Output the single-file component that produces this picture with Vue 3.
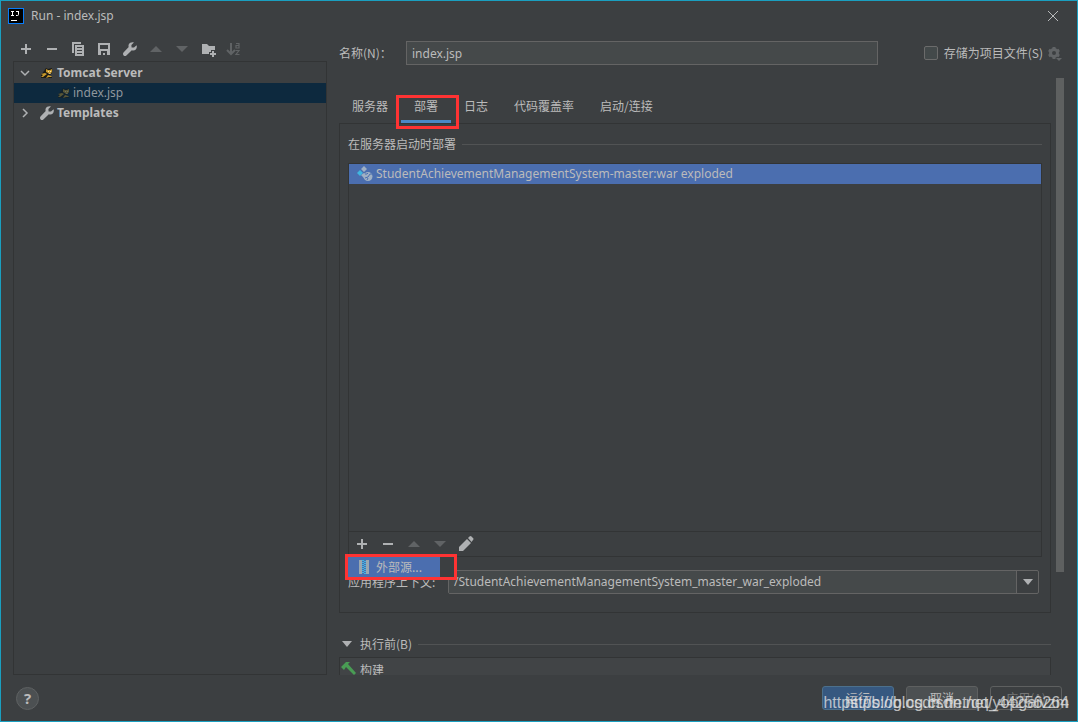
<script setup>
import { ref } from 'vue'
const name = ref('index.jsp')
const context = ref('/StudentAchievementManagementSystem_master_war_exploded')
const saved = ref(false)
</script>

<template>
  <main class="dialog">
    <svg class="defs" aria-hidden="true">
      <symbol id="plus" viewBox="0 0 16 16"><path fill="currentColor" d="M7 3h2v4h4v2H9v4H7V9H3V7h4z" /></symbol>
      <symbol id="minus" viewBox="0 0 16 16"><path fill="currentColor" d="M3 7h10v2H3z" /></symbol>
      <symbol id="up" viewBox="0 0 16 16"><path fill="currentColor" d="M8 5l6 6H2z" /></symbol>
      <symbol id="down" viewBox="0 0 16 16"><path fill="currentColor" d="M8 11L2 5h12z" /></symbol>
      <symbol id="wrench" viewBox="0 0 16 16"><path fill="currentColor" d="M14.6 4.2L12 6.6 9.6 6.400 9.400 4l2.500-2.600C10 .8 7.500 1.600 6.700 3.600c-.3.900-.3 1.700 0 2.500L1.500 11.600c-1.600 1.900 1 4.500 2.900 2.900L9.800 9.200c3.200 1.200 5.800-1.700 4.800-5z" /></symbol>
      <symbol id="cat" viewBox="0 0 16 16">
        <path fill="#1b1a14" d="M5 6l2-3 2 1 4-1v5l-3 3 3 1v1H2v-3z" />
        <path fill="#c99a2c" d="M7 4l2 1h2l2-1v3l-2 2-4-2zM6 8l2 1-4 3H2l2-2-2-1zM9 10l3 1 1 1-3 0-3 1z" />
        <path fill="#f5dfa0" d="M9 6h1v1H9zM11 6h1v1h-1zM9 8h3l-1 1z" />
      </symbol>
    </svg>
    <header class="titlebar">
      <svg class="logo" viewBox="0 0 16 16"><path fill="#087cfa" d="M0 0h16v16H0z" /><path fill="#000" d="M1 1h14v14H1z" /><path fill="none" stroke="#fff" d="M3 3.500h3M4.500 3v5M3 7.500h3M8 3.500h3M10.500 3v3.500q0 1-1 1H8" /><path fill="#fff" d="M3 12h6v1H3z" /></svg>
      <h1>Run - index.jsp</h1>
      <button class="close" aria-label="Close"><svg viewBox="0 0 10 10"><path d="M0 0l10 10M10 0L0 10" stroke="#b8babb" fill="none" /></svg></button>
    </header>
    <div class="body">
      <aside class="sidebar">
        <div class="tools">
          <button aria-label="Add"><svg><use href="#plus" /></svg></button>
          <button aria-label="Remove"><svg><use href="#minus" /></svg></button>
          <button aria-label="Copy"><svg viewBox="0 0 16 16"><path fill="currentColor" d="M2 1h9v2H4v9H2zM5 4h9v11H5zM7 6v1h5V6zm0 3v1h5V9zm0 3v1h5v-1z" fill-rule="evenodd" /></svg></button>
          <button aria-label="Save"><svg viewBox="0 0 16 16"><path fill="currentColor" fill-rule="evenodd" d="M2 2h12v12H2zM4 4v4h8V4zM5 10v4h2v-2h2v2h2v-4z" /></svg></button>
          <button aria-label="Edit templates"><svg><use href="#wrench" /></svg></button>
          <button aria-label="Move up" disabled><svg><use href="#up" /></svg></button>
          <button aria-label="Move down" disabled><svg><use href="#down" /></svg></button>
          <button aria-label="New folder"><svg viewBox="0 0 16 16"><path fill="currentColor" d="M2 3h5l2 2h6v4h-4v2H9v2H2zM12 10h2v2h2v2h-2v2h-2v-2h-2v-2h2z" /></svg></button>
          <button aria-label="Sort" disabled><svg viewBox="0 0 16 16"><path fill="none" stroke="currentColor" stroke-width="2" d="M5 2v11M1 9l4 4 4-4" /><path fill="none" stroke="currentColor" stroke-width="1.200" d="M10 2.500h3V7h-3V4.500h3M9.500 9.500h3.500l-3 4h3.500" /></svg></button>
        </div>
        <ul class="tree">
          <li class="node"><svg class="chev" viewBox="0 0 16 16"><path d="M4 6l4 4 4-4" /></svg><svg class="ic"><use href="#cat" /></svg><b>Tomcat Server</b></li>
          <li class="node child"><svg class="ic"><use href="#cat" /></svg><span>index.jsp</span></li>
          <li class="node"><svg class="chev" viewBox="0 0 16 16"><path d="M6 4l4 4-4 4" /></svg><svg class="ic"><use href="#wrench" /></svg><b>Templates</b></li>
        </ul>
      </aside>
      <section class="content">
        <div class="namerow">
          <label for="name" class="zh">名称(N)：</label>
          <input id="name" v-model="name" class="field" />
          <label class="save zh"><input v-model="saved" type="checkbox" />存储为项目文件(S)</label>
          <svg class="gear" viewBox="0 0 16 16"><circle cx="7" cy="8" r="3.500" fill="none" stroke="#616466" stroke-width="3" /><path stroke="#616466" stroke-width="3" d="M7 2v2M7 12v2M1.800 5l1.800 1M10.400 10l1.800 1M1.800 11l1.800-1M10.400 6l1.800-1" /><path fill="#616466" d="M9 13h6l-3 3z" /></svg>
        </div>
        <div class="scroll">
          <div class="page">
            <nav class="tabs zh">
              <button>服务器</button><button class="on">部署</button><button>日志</button><button>代码覆盖率</button><button>启动/连接</button>
            </nav>
            <div class="panel">
              <h2 class="rule zh">在服务器启动时部署</h2>
              <div class="list">
                <div class="artifact">
                  <svg viewBox="0 0 16 16"><path fill="#9fb0c4" d="M7 0l3 3-3 3-3-3zM7 7l2 2-2 3-3-3z" /><path fill="#40b6e0" d="M3 4l3 3-3 3-3-3z" /><circle cx="11" cy="10.500" r="4.500" fill="#9fb0c4" /><path stroke="#4b6eaf" fill="none" d="M8 12l3-1 2-3 2 0M10 14l1-2M8 8l2 0 1-1" /></svg>
                  <span>StudentAchievementManagementSystem-master:war exploded</span>
                </div>
                <div class="tools listtools">
                  <button aria-label="Add artifact"><svg><use href="#plus" /></svg></button>
                  <button aria-label="Remove artifact"><svg><use href="#minus" /></svg></button>
                  <button aria-label="Artifact up" disabled><svg><use href="#up" /></svg></button>
                  <button aria-label="Artifact down" disabled><svg><use href="#down" /></svg></button>
                  <button aria-label="Edit artifact"><svg viewBox="0 0 16 16"><path fill="currentColor" d="M1 15v-4l8-8 4 4-8 8zM10 2l1.500-1.500q1-.8 2 0L15 2q1 1 0 2l-1.500 2z" /></svg></button>
                  <div class="popup"><button class="zh"><svg viewBox="0 0 16 16"><path fill="#9aa7b0" d="M3 1h3v14H3zM10 1h3v14h-3z" /><path fill="none" stroke="#40b6e0" stroke-width="2" stroke-dasharray="1 1" d="M7 1v14M9 2v13" /></svg>外部源...</button></div>
                </div>
              </div>
              <div class="context">
                <label for="context" class="zh">应用程序上下文:</label>
                <div class="combo"><input id="context" v-model="context" /><button aria-label="Show contexts"><svg viewBox="0 0 10 6"><path fill="#afb1b3" d="M0 0h10L5 6z" /></svg></button></div>
              </div>
            </div>
            <h2 class="rule before zh"><svg viewBox="0 0 10 6"><path fill="#afb1b3" d="M0 0h10L5 6z" /></svg>执行前(B)</h2>
            <div class="tasks zh"><svg viewBox="0 0 16 16"><path fill="#499c54" d="M1 7l5-5h4L8 4l8 9-2 2-8-8-2 3z" /></svg>构建</div>
          </div>
          <div class="track"><div class="thumb"></div></div>
        </div>
      </section>
    </div>
    <footer class="footer">
      <button class="help" aria-label="Help">?</button>
      <div class="actions zh"><button class="primary">运行</button><button>取消</button><button disabled>应用(A)</button></div>
      <span class="mark">https://blog.csdn.net/qq_44256264</span>
      <span class="mark">https://blog.csdn.net/yopgaivzm</span>
    </footer>
  </main>
</template>

<style>
body { margin: 0; background: #3c3f41; }
</style>
<style scoped>
* { box-sizing: border-box; }
.dialog { height: 100vh; display: flex; flex-direction: column; border: 1px solid #1a9fc0; background: #3c3f41; color: #bbbbbb; font: 12px/20px "Noto Sans", "Noto Sans CJK SC", sans-serif; overflow: hidden; }
.defs { display: none; }
svg { width: 16px; height: 16px; flex: none; display: block; }
button, input { font: inherit; color: inherit; margin: 0; }
button { padding: 0; border: 0; background: none; }
.zh { font-family: "Noto Sans CJK SC", sans-serif; font-size: 12px; }
.titlebar { display: flex; align-items: center; height: 29px; padding: 0 19px 0 7px; gap: 7px; flex: none; }
h1 { margin: 0; font-size: 12px; font-weight: 400; flex: 1; }
.close svg { width: 10px; height: 10px; }
.body { flex: 1; min-height: 0; display: flex; gap: 12px; padding-left: 12px; }
.sidebar { flex: 0 0 314px; display: flex; flex-direction: column; }
.tools { display: flex; align-items: center; gap: 10px; color: #afb1b3; }
.sidebar .tools { height: 31px; padding: 7px 5px 0; }
.tools button:disabled { color: #606365; }
.tree { flex: 1; margin: 0; padding: 0; list-style: none; border: 1px solid #323435; }
.node { display: flex; align-items: center; height: 20px; padding-left: 3px; }
.node:first-child { height: 21px; }
.chev { fill: none; stroke: #afb1b3; stroke-width: 1.5; margin-right: 6px; }
.node .ic { margin-right: 2px; color: #afb1b3; }
.child { background: #0d293e; padding-left: 42px; color: #8f979d; }
.child .ic { opacity: 0.4; margin-right: 1px; }
.content { flex: 1; min-width: 0; display: flex; flex-direction: column; }
.namerow { display: flex; align-items: center; padding: 11px 14px 0 0; flex: none; }
.namerow > label:first-child { width: 67px; }
.field { flex: 0 1 472px; min-width: 0; height: 24px; padding: 0 5px; border: 1px solid #646464; background: #45494a; outline: 0; }
.save { display: flex; align-items: center; margin-left: auto; gap: 6px; }
.save input { appearance: none; width: 14px; height: 14px; border: 1px solid #6b6b6b; border-radius: 2px; background: #43494a; }
.gear { margin-left: 4px; }
.scroll { flex: 1; min-height: 0; display: flex; justify-content: space-between; margin-top: 13px; overflow: hidden; }
.page { flex: 1; min-width: 0; display: flex; flex-direction: column; padding-top: 12px; }
.tabs { display: flex; height: 33px; flex: none; }
.tabs button { padding: 2px 13px 0; border-bottom: 3px solid transparent; position: relative; }
.tabs .on { border-bottom-color: #4a88c7; }
.tabs .on::after { content: ""; position: absolute; inset: 5px -8px -9px -5px; border: 3px solid #ff3333; }
.panel { height: 490px; flex: none; border: 1px solid #323435; padding: 10px 8px 0; display: flex; flex-direction: column; }
.rule { display: flex; align-items: center; gap: 6px; margin: 0; font-weight: 400; height: 20px; flex: none; }
.rule::after { content: ""; height: 1px; flex: 1; background: #515354; }
.list { height: 394px; margin-top: 9px; flex: none; border: 1px solid #323435; display: flex; flex-direction: column; justify-content: space-between; }
.artifact { height: 20px; display: flex; align-items: center; gap: 3px; padding-left: 8px; background: #4b6eaf; }
.listtools { position: relative; height: 25px; border-top: 1px solid #323435; padding-left: 5px; }
.popup { position: absolute; left: -4px; top: 22px; width: 112px; height: 26px; border: 3px solid #ff3333; background: #3c3f41; }
.popup button { display: flex; align-items: center; gap: 4px; height: 20px; width: 92px; padding-left: 8px; color: #bbb; background: #4b6eaf; }
.context { display: flex; align-items: center; margin-top: 13px; padding-right: 3px; }
.context label { width: 100px; }
.combo { display: flex; flex: 1; height: 24px; border: 1px solid #646464; border-radius: 2px; }
.combo input { flex: 1; min-width: 0; padding: 0 5px; border: 0; background: #45494a; outline: 0; }
.combo button { width: 22px; border-left: 1px solid #646464; display: grid; place-items: center; }
.combo svg, .before svg { width: 10px; height: 6px; }
.before { margin-top: 21px; padding-left: 3px; }
.before svg { margin-right: 2px; }
.tasks { flex: 1; display: flex; gap: 4px; margin-top: 3px; padding: 2px 0 0; border: 1px solid #323435; border-bottom: 0; background: #414446; }
.track { width: 26px; padding-left: 5px; flex: none; }
.thumb { width: 8px; height: 494px; background: #5e6060; }
.footer { position: relative; height: 46px; flex: none; display: flex; align-items: center; padding: 0 15px; }
.help { width: 23px; height: 23px; border: 1px solid #5e6162; border-radius: 50%; background: #4c5052; font-weight: 700; font-size: 15px; }
.actions { display: flex; gap: 12px; margin-left: auto; }
.actions button { width: 72px; height: 24px; border: 1px solid #5e6060; border-radius: 3px; background: #4c5052; }
.actions .primary { background: #365880; border-color: #4c708c; }
.actions button:disabled { background: none; color: #777; }
.mark { position: absolute; right: 8px; top: 18px; font: 16px/20px "Liberation Sans", sans-serif; color: rgba(230, 230, 230, 0.75); white-space: nowrap; }
</style>
